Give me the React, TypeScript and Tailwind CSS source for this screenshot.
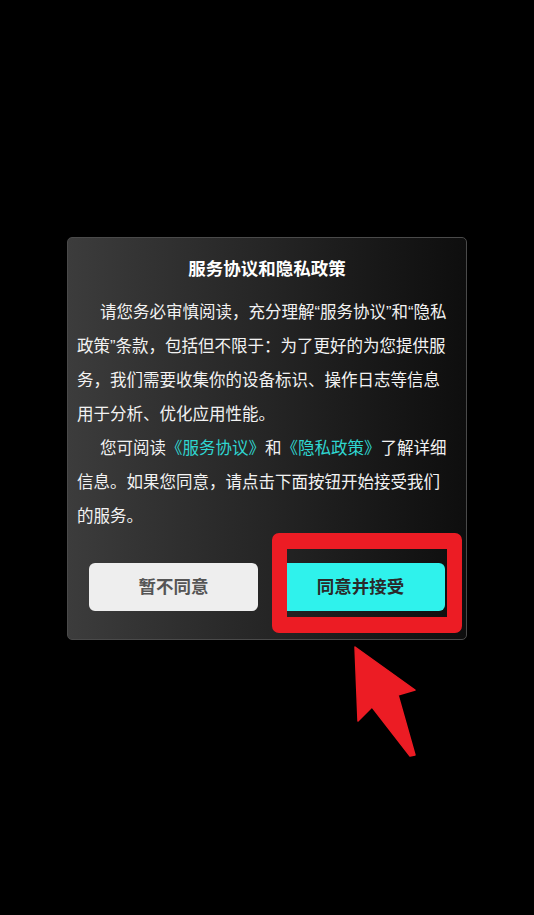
export default function App() {
  return (
    <div className="relative min-h-[915px] w-full bg-black pt-[237px] font-['Liberation_Sans','Noto_Sans_CJK_SC',sans-serif]">
      <div className="flex justify-center">
        <div className="relative w-[400px] rounded-[5px] border border-[#4a4a4a] bg-linear-to-r from-[#3c3c3c] via-[#252525] to-[#0e0e0e] pb-[28px] pl-[9px] pr-[12px] pt-[19px]">
          <h2 className="pl-[3px] text-center text-[17.5px] font-bold leading-[24px] text-white">
            服务协议和隐私政策
          </h2>
          <div className="mt-[14px] text-[16.5px] leading-[34px] text-[#f2f2f2]">
            <p className="indent-[23px]">
              请您务必审慎阅读，充分理解“服务协议”和“隐私政策”条款，包括但不限于：为了更好的为您提供服务，我们需要收集你的设备标识、操作日志等信息用于分析、优化应用性能。
            </p>
            <p className="indent-[23px]">
              您可阅读<span className="text-[#2fd6d1]">《服务协议》</span>和
              <span className="text-[#2fd6d1]">《隐私政策》</span>了解详细信息。如果您同意，请点击下面按钮开始接受我们的服务。
            </p>
          </div>
          <div className="mt-[30px] flex gap-[18px] pl-[12px]">
            <button className="h-[48px] w-[169px] rounded-[6px] bg-[#eeeeee] text-[17.5px] font-semibold text-[#555555]">
              暂不同意
            </button>
            <button className="h-[48px] w-[169px] rounded-[6px] bg-[#2ff2ec] text-[17.5px] font-semibold text-[#2a2a2a]">
              同意并接受
            </button>
          </div>
          {/* red annotation frame */}
          <div className="pointer-events-none absolute left-[204px] top-[295px] h-[100px] w-[190px] rounded-[7px] border-[15px] border-b-[16px] border-t-[16px] border-[#ec1c24]" />
        </div>
      </div>
      <svg
        className="pointer-events-none absolute left-[350px] top-[640px]"
        width="70"
        height="120"
        viewBox="0 0 70 120"
      >
        <path
          d="M5 7 L65 50 L48 55 L65 115 L60 116 L22 67 L8 81 Z"
          fill="#ec1c24"
          stroke="#ec1c24"
          strokeWidth="1.5"
          strokeLinejoin="round"
        />
      </svg>
    </div>
  );
}
